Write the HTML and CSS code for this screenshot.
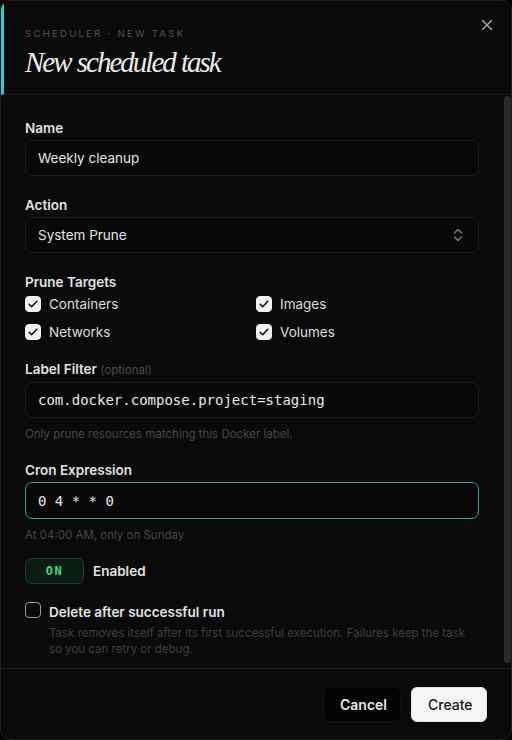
FILE: index.html
```html
<!DOCTYPE html>
<html lang="en">

<head>
    <meta charset="UTF-8">
    <meta name="viewport" content="width=device-width, initial-scale=1.0">
    <title>New scheduled task</title>
    <link rel="stylesheet" href="styles.css">
</head>

<body>
    <div class="modal">
        <div class="modal-header">
            <div class="eyebrow">Scheduler &middot; New task</div>
            <h1 class="title">New scheduled task</h1>
            <button class="close" aria-label="Close">
                <svg width="12" height="12" viewBox="0 0 12 12"><path d="M1.5 1.5l9 9M10.5 1.5l-9 9" stroke="currentColor" stroke-width="1.5" stroke-linecap="round"/></svg>
            </button>
        </div>

        <div class="modal-main">
            <div class="modal-body">
                <div class="field">
                    <label class="label">Name</label>
                    <input class="input" type="text" value="Weekly cleanup">
                </div>

                <div class="field">
                    <label class="label">Action</label>
                    <div class="input select">
                        <span>System Prune</span>
                        <svg width="10" height="14" viewBox="0 0 10 14"><path d="M1.5 5L5 1.5 8.5 5M1.5 9L5 12.5 8.5 9" fill="none" stroke="currentColor" stroke-width="1.5" stroke-linecap="round" stroke-linejoin="round"/></svg>
                    </div>
                </div>

                <div class="field">
                    <label class="label">Prune Targets</label>
                    <div class="targets">
                        <div class="check"><span class="box checked"><svg width="12" height="12" viewBox="0 0 12 12"><path d="M2.2 6.3l2.4 2.4 5.2-5.4" fill="none" stroke="#111" stroke-width="1.6" stroke-linecap="round" stroke-linejoin="round"/></svg></span>Containers</div>
                        <div class="check"><span class="box checked"><svg width="12" height="12" viewBox="0 0 12 12"><path d="M2.2 6.3l2.4 2.4 5.2-5.4" fill="none" stroke="#111" stroke-width="1.6" stroke-linecap="round" stroke-linejoin="round"/></svg></span>Images</div>
                        <div class="check"><span class="box checked"><svg width="12" height="12" viewBox="0 0 12 12"><path d="M2.2 6.3l2.4 2.4 5.2-5.4" fill="none" stroke="#111" stroke-width="1.6" stroke-linecap="round" stroke-linejoin="round"/></svg></span>Networks</div>
                        <div class="check"><span class="box checked"><svg width="12" height="12" viewBox="0 0 12 12"><path d="M2.2 6.3l2.4 2.4 5.2-5.4" fill="none" stroke="#111" stroke-width="1.6" stroke-linecap="round" stroke-linejoin="round"/></svg></span>Volumes</div>
                    </div>
                </div>

                <div class="field">
                    <label class="label">Label Filter <span class="optional">(optional)</span></label>
                    <input class="input mono" type="text" value="com.docker.compose.project=staging">
                    <div class="help">Only prune resources matching this Docker label.</div>
                </div>

                <div class="field field-last">
                    <label class="label">Cron Expression</label>
                    <input class="input mono focused" type="text" value="0 4 * * 0">
                    <div class="help">At 04:00 AM, only on Sunday</div>
                </div>

                <div class="toggle-row">
                    <span class="toggle">ON</span>
                    <span class="toggle-label">Enabled</span>
                </div>

                <div class="delete-row">
                    <span class="box"></span>
                    <div>
                        <div class="delete-title">Delete after successful run</div>
                        <div class="delete-desc">Task removes itself after its first successful execution. Failures keep the task so you can retry or debug.</div>
                    </div>
                </div>
            </div>
            <!-- scroll thumb sits over the right edge of the body -->
            <div class="scroll-thumb"></div>
        </div>

        <div class="modal-footer">
            <button class="btn btn-ghost">Cancel</button>
            <button class="btn btn-primary">Create</button>
        </div>
    </div>
</body>

</html>
```

FILE: styles.css
```css
html, body {
    margin: 0;
    padding: 0;
    background-color: #000;
}

body {
    font-family: Inter, "Noto Sans", sans-serif;
    color: #e4e4e4;
}

.modal {
    box-sizing: border-box;
    width: 512px;
    height: 740px;
    background-color: #0a0a0a;
    border: 1px solid #1e1e1e;
    border-radius: 10px;
    display: flex;
    flex-direction: column;
    overflow: hidden;
}

/* header with the teal accent strip down the left side */
.modal-header {
    position: relative;
    height: 94px;
    flex: none;
    box-sizing: border-box;
    padding: 27px 24px 0 21px;
    border-bottom: 1px solid #1a1a1a;
    border-left: 3px solid #3fc4c8;
}

.eyebrow {
    font-size: 9.5px;
    letter-spacing: 2.3px;
    text-transform: uppercase;
    color: #555;
    line-height: 12px;
}

.title {
    margin: 5px 0 0;
    font-family: "Liberation Serif", serif;
    font-style: italic;
    font-weight: 400;
    font-size: 29px;
    letter-spacing: -2px;
    word-spacing: 1px;
    line-height: 34px;
    color: #ececec;
}

.close {
    position: absolute;
    top: 16px;
    right: 16px;
    width: 16px;
    height: 16px;
    padding: 0;
    border: 0;
    background: none;
    color: #a8a8a8;
    display: flex;
    align-items: center;
    justify-content: center;
}

.modal-main {
    position: relative;
    flex: 1;
    min-height: 0;
}

.modal-body {
    height: 100%;
    box-sizing: border-box;
    overflow: hidden;
    padding: 24px 32px 22px 24px;
}

.scroll-thumb {
    position: absolute;
    top: 1px;
    bottom: 5px;
    right: 0;
    width: 7px;
    background: #2b2b2b;
    border-radius: 4px;
}

.field {
    margin-bottom: 20px;
}

.field-last {
    margin-bottom: 16px;
}

.label {
    display: block;
    font-size: 13.5px;
    font-weight: 600;
    line-height: 18px;
    color: #e2e2e2;
    margin-bottom: 3px;
}

.optional {
    font-size: 11.5px;
    font-weight: 400;
    color: #4a4a4a;
}

.input {
    box-sizing: border-box;
    display: block;
    width: 100%;
    height: 36px;
    padding: 0 12px;
    background-color: #080808;
    border: 1px solid #1c1c1c;
    border-radius: 7px;
    font-family: Inter, sans-serif;
    font-size: 13.5px;
    color: #e6e6e6;
    outline: none;
}

.select {
    display: flex;
    align-items: center;
    justify-content: space-between;
    padding-right: 15px;
}

.select svg {
    color: #777;
}

.mono {
    font-family: "DejaVu Sans Mono", monospace;
    font-size: 14px;
    color: #e8e8e8;
}

.focused {
    height: 37px;
    border: 1.5px solid #3a9ea3;
}

.help {
    margin-top: 9px;
    font-size: 11.5px;
    line-height: 14px;
    color: #474747;
}

.targets {
    display: grid;
    grid-template-columns: 231px 1fr;
    row-gap: 12px;
    margin-top: 5px;
}

.check {
    display: flex;
    align-items: center;
    gap: 8px;
    font-size: 13.5px;
    line-height: 16px;
    color: #dcdcdc;
}

.box {
    box-sizing: border-box;
    flex: none;
    width: 16px;
    height: 16px;
    border-radius: 4px;
    border: 1.5px solid #9a9a9a;
    display: flex;
    align-items: center;
    justify-content: center;
}

.box.checked {
    background-color: #f2f2f2;
    border-color: #f2f2f2;
}

.toggle-row {
    display: flex;
    align-items: center;
    gap: 9px;
}

.toggle {
    box-sizing: border-box;
    width: 59px;
    height: 26px;
    display: flex;
    align-items: center;
    justify-content: center;
    background-color: #0b1c13;
    border: 1px solid #1c3a29;
    border-radius: 6px;
    font-family: "DejaVu Sans Mono", monospace;
    font-size: 12px;
    font-weight: 600;
    letter-spacing: 1.5px;
    color: #3ed982;
}

.toggle-label {
    font-size: 13.5px;
    font-weight: 600;
    color: #e2e2e2;
}

.delete-row {
    display: flex;
    gap: 8px;
    margin-top: 18px;
}

.delete-title {
    font-size: 13.5px;
    font-weight: 600;
    line-height: 18px;
    margin-top: 1px;
    color: #e2e2e2;
}

.delete-desc {
    margin-top: 4px;
    font-size: 11.5px;
    line-height: 16px;
    color: #3f3f3f;
}

.modal-footer {
    flex: none;
    height: 71px;
    box-sizing: border-box;
    border-top: 1px solid #1a1a1a;
    display: flex;
    align-items: center;
    justify-content: flex-end;
    gap: 10px;
    padding: 0 24px;
}

.btn {
    height: 35px;
    padding: 0 16px;
    border-radius: 6px;
    font-family: Inter, sans-serif;
    font-size: 14px;
    font-weight: 500;
}

.btn-ghost {
    background-color: #030303;
    border: 1px solid #0f0f0f;
    color: #e8e8e8;
    font-weight: 600;
    width: 78px;
}

.btn-primary {
    background-color: #f5f5f5;
    border: 1px solid #e0e0e0;
    color: #151515;
    width: 76px;
}
```
